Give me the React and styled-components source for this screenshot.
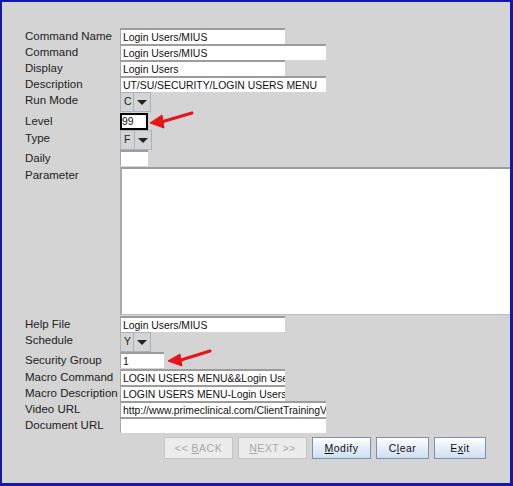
import React from 'react';
import styled, { createGlobalStyle } from 'styled-components';

const Global = createGlobalStyle`
  body {
    margin: 0;
    background: #ffffff;
  }
`;

// window frame with the blue edge
const Frame = styled.div`
  position: relative;
  width: 513px;
  height: 486px;
  box-sizing: border-box;
  border-top: 2px solid #1818a8;
  border-left: 2px solid #1818a8;
  border-right: 3px solid #1818a8;
  border-bottom: 3px solid #1818a8;
  background: #d4d4d4;
  font-family: 'Liberation Sans', Arial, sans-serif;
  padding-top: 26px;
  overflow: hidden;
`;

const Form = styled.div`
  display: grid;
  grid-template-columns: 95px 1fr;
  padding-left: 23px;
`;

const Label = styled.div`
  font-size: 11.5px;
  line-height: 16px;
  color: #222;
  white-space: nowrap;
  height: ${(p) => p.$h || 16}px;
`;

const Cell = styled.div`
  height: ${(p) => p.$h || 16}px;
  display: flex;
  align-items: flex-start;
`;

const TextField = styled.input`
  box-sizing: border-box;
  width: ${(p) => p.$w}px;
  height: 16px;
  margin: 0;
  padding: 0 0 0 2px;
  border: none;
  border-top: 2px solid #9c9c9c;
  border-left: 1px solid #a8a8a8;
  background: #fff;
  font-family: 'Liberation Sans', Arial, sans-serif;
  font-size: 10.4px;
  color: #111;
  outline: none;
`;

const LevelField = styled.input`
  box-sizing: border-box;
  width: 28px;
  height: 17px;
  margin: 0;
  padding: 0;
  border: 2px solid #000;
  background: #fff;
  font-family: 'Liberation Sans', Arial, sans-serif;
  font-size: 10.4px;
  color: #111;
  outline: none;
`;

const Combo = styled.div`
  display: flex;
  height: 20px;
  width: ${(p) => p.$w || 31}px;
  box-sizing: border-box;
  border: 1px solid #a6b2c2;
  background: #d4d4d4;
`;

const ComboValue = styled.div`
  flex: 1;
  font-size: 10.4px;
  line-height: 18px;
  padding-left: 3px;
  color: #222;
  border-right: 1px solid #a6b2c2;
`;

const ComboArrow = styled.div`
  width: 16px;
  display: flex;
  align-items: center;
  justify-content: center;

  &::after {
    content: '';
    border-left: 5px solid transparent;
    border-right: 5px solid transparent;
    border-top: 5px solid #222;
  }
`;

const TextArea = styled.div`
  box-sizing: border-box;
  width: 100%;
  height: 148px;
  border-top: 2px solid #9c9c9c;
  border-left: 2px solid #a8a8a8;
  border-bottom: 1px solid #b8c0cc;
  background: #fff;
`;

const ButtonRow = styled.div`
  display: flex;
  gap: 5px;
  padding-left: 162px;
  margin-top: 4px;
`;

const Button = styled.div`
  box-sizing: border-box;
  width: ${(p) => p.$w}px;
  height: 22px;
  display: flex;
  align-items: center;
  justify-content: center;
  white-space: pre;
  font-size: 10.5px;
  letter-spacing: 0.5px;
  color: ${(p) => (p.$disabled ? '#a8a8a8' : '#111')};
  border: 1px solid ${(p) => (p.$disabled ? '#c4c4c4' : '#7d90ad')};
  background: ${(p) =>
    p.$disabled ? '#ececec' : 'linear-gradient(#ffffff, #e2ecf8 55%, #cfdff2)'};
`;

const Annotations = styled.svg`
  position: absolute;
  left: -2px;
  top: -2px;
  pointer-events: none;
`;

function Arrow({ tail, tip, c1, c2 }) {
  return (
    <g fill="#e8131b" stroke="#e8131b">
      <line x1={tail[0]} y1={tail[1]} x2={(c1[0] + c2[0]) / 2} y2={(c1[1] + c2[1]) / 2} strokeWidth="3" strokeLinecap="round" />
      <polygon points={`${tip[0]},${tip[1]} ${c1[0]},${c1[1]} ${c2[0]},${c2[1]}`} strokeWidth="1" strokeLinejoin="round" />
    </g>
  );
}

function Text({ w, value }) {
  return <TextField $w={w} readOnly defaultValue={value} />;
}

function Select({ value, w }) {
  return (
    <Combo $w={w}>
      <ComboValue>{value}</ComboValue>
      <ComboArrow />
    </Combo>
  );
}

export default function App() {
  return (
    <>
      <Global />
      <Frame>
        <Form>
          <Label>Command Name</Label>
          <Cell><Text w={165} value="Login Users/MIUS" /></Cell>
          <Label>Command</Label>
          <Cell><Text w={206} value="Login Users/MIUS" /></Cell>
          <Label>Display</Label>
          <Cell><Text w={165} value="Login Users" /></Cell>
          <Label>Description</Label>
          <Cell><Text w={206} value="UT/SU/SECURITY/LOGIN USERS MENU" /></Cell>

          <Label $h={21}>Run Mode</Label>
          <Cell $h={21}><Select value="C" w={31} /></Cell>
          <Label $h={17}>Level</Label>
          <Cell $h={17}><LevelField readOnly defaultValue="99" /></Cell>
          <Label $h={20}>Type</Label>
          <Cell $h={20}><Select value="F" w={32} /></Cell>
          <Label $h={17}>Daily</Label>
          <Cell $h={17}><Text w={28} value="" /></Cell>
          <Label $h={149}>Parameter</Label>
          <Cell $h={149}><TextArea /></Cell>

          <Label>Help File</Label>
          <Cell><Text w={165} value="Login Users/MIUS" /></Cell>
          <Label $h={20}>Schedule</Label>
          <Cell $h={20}><Select value="Y" w={31} /></Cell>
          <Label $h={17}>Security Group</Label>
          <Cell $h={17}><Text w={44} value="1" /></Cell>
          <Label>Macro Command</Label>
          <Cell><Text w={165} value="LOGIN USERS MENU&&Login Users&&Login Users" /></Cell>
          <Label>Macro Description</Label>
          <Cell><Text w={165} value="LOGIN USERS MENU-Login Users" /></Cell>
          <Label>Video URL</Label>
          <Cell><Text w={206} value="http://www.primeclinical.com/ClientTrainingVideos" /></Cell>
          <Label>Document URL</Label>
          <Cell><Text w={206} value="" /></Cell>
        </Form>

        <ButtonRow>
          <Button $w={69} $disabled>{'<< '}<u>B</u>ACK</Button>
          <Button $w={69} $disabled><u>N</u>{'EXT >>'}</Button>
          <Button $w={59}><u>M</u>odify</Button>
          <Button $w={53}>C<u>l</u>ear</Button>
          <Button $w={52}>E<u>x</u>it</Button>
        </ButtonRow>

        <Annotations width="513" height="486">
          <Arrow tail={[192, 113]} tip={[150, 123]} c1={[162, 115]} c2={[164, 128]} />
          <Arrow tail={[210, 351]} tip={[168, 361]} c1={[180, 354]} c2={[182, 366]} />
        </Annotations>
      </Frame>
    </>
  );
}
